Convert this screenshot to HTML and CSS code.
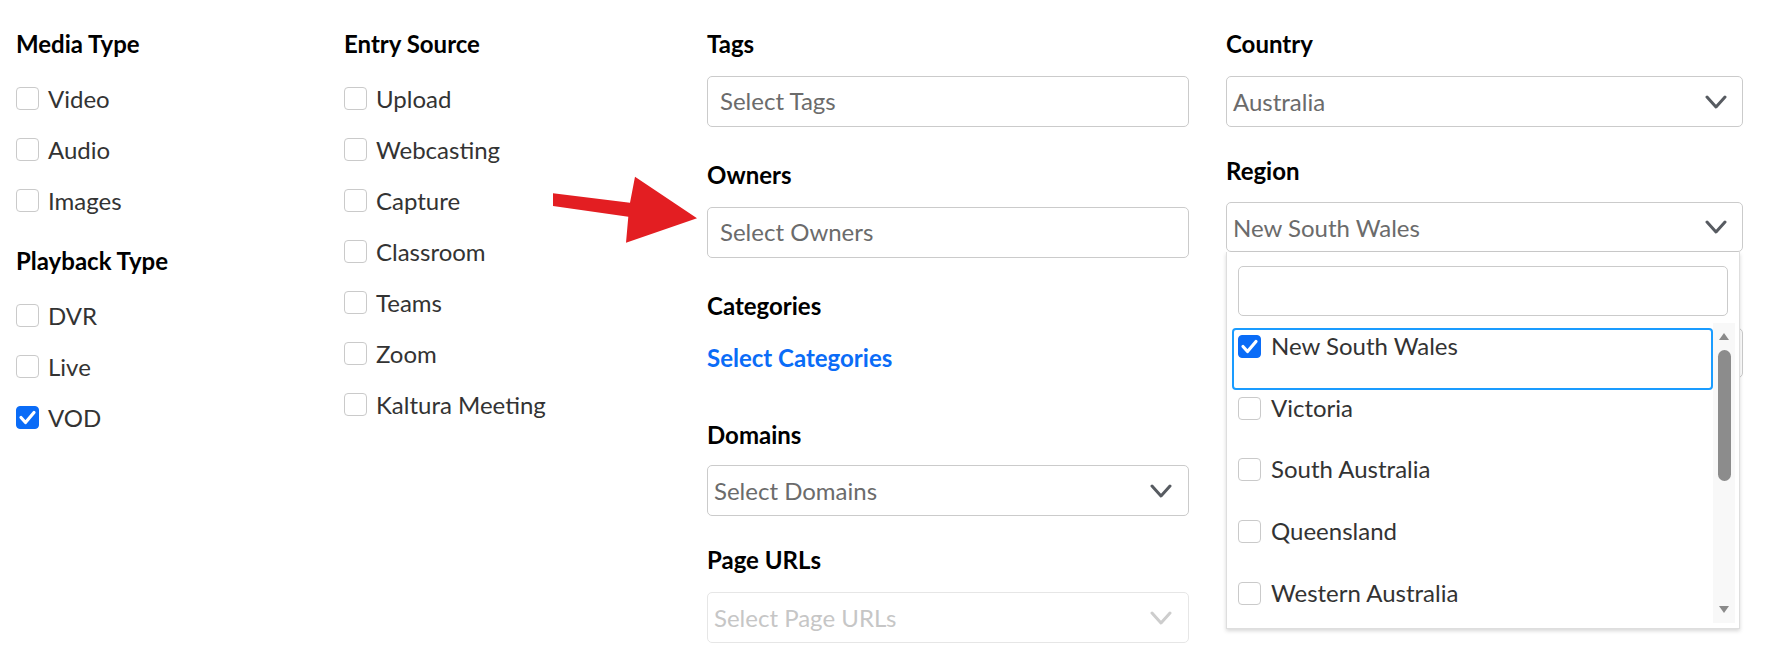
FILE: index.html
```html
<!DOCTYPE html>
<html lang="en">
<head>
<meta charset="utf-8">
<title>Filters</title>
<link rel="stylesheet" href="styles.css">
</head>
<body>
<div class="filters">

  <div class="col">
    <section class="group">
      <h3 class="title">Media Type</h3>
      <ul class="check-list">
        <li class="check"><span class="box"></span><span>Video</span></li>
        <li class="check"><span class="box"></span><span>Audio</span></li>
        <li class="check"><span class="box"></span><span>Images</span></li>
      </ul>
    </section>
    <section class="group group--next">
      <h3 class="title">Playback Type</h3>
      <ul class="check-list">
        <li class="check"><span class="box"></span><span>DVR</span></li>
        <li class="check"><span class="box"></span><span>Live</span></li>
        <li class="check"><span class="box box--on"><svg viewBox="0 0 23 23" width="23" height="23"><path d="M5 11.5l4.5 5L18 6.5" fill="none" stroke="#fff" stroke-width="3.2" stroke-linecap="round" stroke-linejoin="round"/></svg></span><span>VOD</span></li>
      </ul>
    </section>
  </div>

  <div class="col">
    <section class="group">
      <h3 class="title">Entry Source</h3>
      <ul class="check-list">
        <li class="check"><span class="box"></span><span>Upload</span></li>
        <li class="check"><span class="box"></span><span>Webcasting</span></li>
        <li class="check"><span class="box"></span><span>Capture</span></li>
        <li class="check"><span class="box"></span><span>Classroom</span></li>
        <li class="check"><span class="box"></span><span>Teams</span></li>
        <li class="check"><span class="box"></span><span>Zoom</span></li>
        <li class="check"><span class="box"></span><span>Kaltura Meeting</span></li>
      </ul>
    </section>
  </div>

  <div class="col">
    <div class="field">
      <h3 class="title">Tags</h3>
      <div class="control control--text">Select Tags</div>
    </div>
    <div class="field field--owners">
      <h3 class="title">Owners</h3>
      <div class="control control--text">Select Owners</div>
    </div>
    <div class="field field--categories">
      <h3 class="title">Categories</h3>
      <a class="link" href="#">Select Categories</a>
    </div>
    <div class="field field--domains">
      <h3 class="title">Domains</h3>
      <div class="control control--select control--tight">
        <span>Select Domains</span>
        <svg class="chevron" viewBox="0 0 22 14" width="22" height="14"><path d="M2 2l9 10 9-10" fill="none" stroke="currentColor" stroke-width="3" stroke-linecap="round" stroke-linejoin="round"/></svg>
      </div>
    </div>
    <div class="field field--urls">
      <h3 class="title">Page URLs</h3>
      <div class="control control--select control--disabled">
        <span>Select Page URLs</span>
        <svg class="chevron" viewBox="0 0 22 14" width="22" height="14"><path d="M2 2l9 10 9-10" fill="none" stroke="currentColor" stroke-width="3" stroke-linecap="round" stroke-linejoin="round"/></svg>
      </div>
    </div>
  </div>

  <div class="col">
    <div class="field">
      <h3 class="title">Country</h3>
      <div class="control control--select">
        <span>Australia</span>
        <svg class="chevron" viewBox="0 0 22 14" width="22" height="14"><path d="M2 2l9 10 9-10" fill="none" stroke="currentColor" stroke-width="3" stroke-linecap="round" stroke-linejoin="round"/></svg>
      </div>
    </div>
    <div class="field field--region">
      <h3 class="title">Region</h3>
      <div class="dropdown">
        <div class="control control--select control--region">
          <span>New South Wales</span>
          <svg class="chevron" viewBox="0 0 22 14" width="22" height="14"><path d="M2 2l9 10 9-10" fill="none" stroke="currentColor" stroke-width="3" stroke-linecap="round" stroke-linejoin="round"/></svg>
        </div>
        <div class="menu">
          <div class="menu-search"></div>
          <div class="menu-body">
            <ul class="menu-items">
              <li class="menu-item menu-item--focus"><span class="box box--on"><svg viewBox="0 0 23 23" width="23" height="23"><path d="M5 11.5l4.5 5L18 6.5" fill="none" stroke="#fff" stroke-width="3.2" stroke-linecap="round" stroke-linejoin="round"/></svg></span><span>New South Wales</span></li>
              <li class="menu-item"><span class="box"></span><span>Victoria</span></li>
              <li class="menu-item"><span class="box"></span><span>South Australia</span></li>
              <li class="menu-item"><span class="box"></span><span>Queensland</span></li>
              <li class="menu-item"><span class="box"></span><span>Western Australia</span></li>
            </ul>
            <div class="scrollbar">
              <span class="scroll-up"></span>
              <span class="scroll-thumb"></span>
              <span class="scroll-down"></span>
            </div>
          </div>
        </div>
      </div>
    </div>
    <!-- next field, covered by the open region menu -->
    <div class="field field--city">
      <div class="control control--region"></div>
    </div>
  </div>

</div>

<!-- callout arrow pointing at the owners field -->
<svg class="callout" viewBox="550 170 150 80" width="150" height="80">
  <polygon points="553,193.3 630,202.7 635,176.7 697,218.3 626,242.7 628.3,216.7 553,206" fill="#e31e22"/>
</svg>
</body>
</html>
```

FILE: styles.css
```css
body {
  margin: 0;
  background: #fff;
  color: #333;
  font-family: Lato, "Liberation Sans", sans-serif;
  font-size: 24px;
}

.filters {
  display: grid;
  grid-template-columns: 291px 326px 482px 517px;
  column-gap: 37px;
  align-items: start;
  padding: 29px 16px 0;
}

.title {
  margin: 0;
  font-size: 24px;
  font-weight: 700;
  line-height: 29px;
  color: #000;
}

/* checkbox groups */
.group--next {
  margin-top: 20px;
}

.check-list {
  list-style: none;
  margin: 15px 0 0;
  padding: 0;
}

.check {
  display: flex;
  align-items: center;
  gap: 9px;
  height: 51px;
  line-height: 29px;
}

.box {
  flex: none;
  display: flex;
  align-items: center;
  justify-content: center;
  width: 23px;
  height: 23px;
  box-sizing: border-box;
  border: 1px solid #cacaca;
  border-radius: 4px;
  background: #fff;
}

.box--on {
  background: #0a6cf7;
  border-color: #0a6cf7;
}

.box svg {
  flex: none;
}

/* form fields */
.field--owners { margin-top: 33px; }
.field--categories { margin-top: 33px; }
.field--domains { margin-top: 48px; }
.field--urls { margin-top: 29px; }
.field--region { margin-top: 29px; }
.field--city { margin-top: 76px; }

.control {
  display: flex;
  align-items: center;
  height: 51px;
  margin-top: 18px;
  box-sizing: border-box;
  border: 1px solid #cbcbcb;
  border-radius: 5px;
  background: #fff;
  color: #6b6b6b;
  line-height: 29px;
  white-space: nowrap;
}

.control--text {
  padding: 0 12px 3px;
}

.control--select {
  justify-content: space-between;
  padding: 0 15px 0 6px;
}

.control--tight {
  margin-top: 16px;
  padding-right: 16px;
}

.control--region {
  height: 50px;
  margin-top: 17px;
}

.field--city .control {
  margin-top: 0;
}

.control--disabled {
  border-color: #e6e6e6;
  color: #c6c6c6;
  padding-right: 16px;
}

.chevron {
  flex: none;
  color: #575b61;
}

.control--disabled .chevron {
  color: #cdcdcd;
}

.link {
  display: block;
  margin-top: 23px;
  color: #0a6cf7;
  font-weight: 700;
  line-height: 29px;
  text-decoration: none;
}

/* open region dropdown */
.dropdown {
  position: relative;
}

.menu {
  position: absolute;
  top: 100%;
  left: 0;
  z-index: 2;
  display: flex;
  flex-direction: column;
  width: 514px;
  height: 377px;
  box-sizing: border-box;
  border: 1px solid #dedede;
  border-top: none;
  background: #fff;
  box-shadow: 0 2px 4px rgba(0, 0, 0, 0.16);
}

.menu-search {
  height: 50px;
  margin: 14px 11px 0;
  box-sizing: border-box;
  border: 1px solid #cbcbcb;
  border-radius: 5px;
}

.menu-body {
  display: flex;
  height: 300px;
  margin: 7px 4px 0 5px;
}

.menu-items {
  flex: 1;
  list-style: none;
  margin: 0;
  padding: 5px 0 0;
  overflow: hidden;
}

.menu-item {
  display: flex;
  align-items: flex-start;
  gap: 10px;
  height: 61.7px;
  box-sizing: border-box;
  padding: 1px 4px 0;
  border: 2px solid transparent;
  border-radius: 4px;
  line-height: 29px;
  color: #333;
}

.menu-item .box {
  margin-top: 4px;
}

.menu-item--focus {
  border-color: #1a9cff;
}

.scrollbar {
  display: flex;
  flex-direction: column;
  align-items: center;
  width: 22px;
  background: #f8f8f8;
}

.scroll-up,
.scroll-down {
  width: 0;
  height: 0;
  border-left: 5.5px solid transparent;
  border-right: 5.5px solid transparent;
}

.scroll-up {
  margin-top: 10px;
  border-bottom: 7px solid #8a8a8a;
}

.scroll-thumb {
  width: 13px;
  height: 131px;
  margin-top: 10px;
  border-radius: 7px;
  background: #8c8c8c;
}

.scroll-down {
  margin-top: auto;
  margin-bottom: 10px;
  border-top: 7px solid #8a8a8a;
}

/* annotation */
.callout {
  position: absolute;
  left: 550px;
  top: 170px;
}
```
